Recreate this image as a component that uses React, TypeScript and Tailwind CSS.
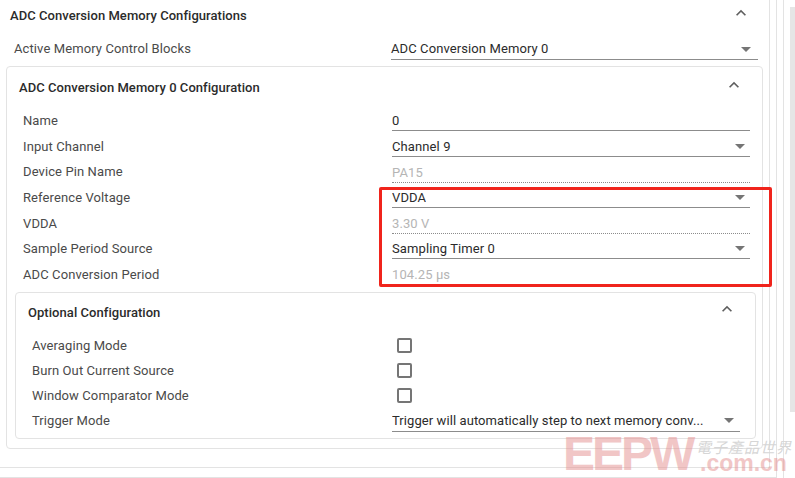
const font = { fontFamily: "Roboto, 'Noto Sans', sans-serif" };

function ChevronUp() {
  return (
    <svg width="20" height="20" viewBox="0 0 24 24" fill="#5f5f5f">
      <path d="M12 8l-6 6 1.41 1.41L12 10.83l4.59 4.58L18 14z" />
    </svg>
  );
}

function Caret() {
  return (
    <svg width="24" height="24" viewBox="0 0 24 24" fill="#757575" className="shrink-0">
      <path d="M7 10l5 5 5-5z" />
    </svg>
  );
}

function SelectField({ value, pad = "pt-[6px]", caret = "-mr-[2px]" }: { value: string; pad?: string; caret?: string }) {
  return (
    <div className={`flex h-full items-center justify-between border-b border-[#8c8c8c] text-[#2b2b2b] ${pad}`}>
      <span className="truncate">{value}</span>
      <span className={`-mt-[2px] flex h-4 items-center ${caret}`}>
        <Caret />
      </span>
    </div>
  );
}

function Row({ label, children }: { label: string; children: React.ReactNode }) {
  return (
    <div className="flex h-[25.6px] items-stretch text-[13px] tracking-[0.1px]">
      <div className="w-[369px] pt-[5.5px] text-[#4a4a4a]">{label}</div>
      <div className="flex-1">{children}</div>
    </div>
  );
}

function TextField({ value }: { value: string }) {
  return <div className="flex h-full items-center border-b border-[#8c8c8c] pt-[6px] text-[#2b2b2b]">{value}</div>;
}

function ReadOnly({ value }: { value: string }) {
  return <div className="flex h-full items-center border-b border-dotted border-[#8c8c8c] pt-[7px] text-[#b5b5b5]">{value}</div>;
}

function CheckRow({ label }: { label: string }) {
  return (
    <div className="flex h-[25px] items-center text-[13px] tracking-[0.1px]">
      <div className="w-[365px] pt-[1px] text-[#4a4a4a]">{label}</div>
      <div className="h-[15px] w-[15px] rounded-[2px] border-2 border-[#757575]"></div>
    </div>
  );
}

export default function App() {
  return (
    <div className="relative h-[478px] w-[795px] overflow-hidden bg-white" style={font}>
      <div className="flex h-full">
        {/* nested parent panels, only right/bottom edges are visible */}
        <div className="h-[488px] w-[784px] border-r border-b border-[#e3e3e3] pr-[6px] pb-[9px]">
          <div className="h-full border-r border-b border-[#e3e3e3] pr-[6px] pb-[9px]">
            <div className="h-full border-r border-b border-[#e3e3e3] pr-[6px] pb-[9px]">
              <div className="h-full">
                <div className="flex h-[30px] items-center justify-between pt-[1px] pr-[12px] pl-[10px]">
                  <span className="text-[13px] font-medium tracking-[0.05px] text-[#2b2b2b]">ADC Conversion Memory Configurations</span>
                  <span className="-mt-[6px]"><ChevronUp /></span>
                </div>
                <div className="flex h-[30px] pl-[14px] pr-[5px] text-[13px] tracking-[0.1px]">
                  <div className="w-[377px] pt-[9px] text-[#4a4a4a]">Active Memory Control Blocks</div>
                  <div className="flex-1">
                    <div className="flex h-full items-center justify-between border-b border-[#8c8c8c] pt-[8px] text-[#2b2b2b]">
                      <span>ADC Conversion Memory 0</span>
                      <span className="flex h-4 items-center"><Caret /></span>
                    </div>
                  </div>
                </div>

                <div className="mt-[6px] ml-[6px] h-[383px] rounded-[4px] border border-[#e3e3e3] pl-[16px] pr-[12px]">
                  <div className="-ml-[4px] flex h-[38.8px] items-center justify-between pt-[3px] pr-[6px]">
                    <span className="text-[13px] font-medium tracking-[0.05px] text-[#2b2b2b]">ADC Conversion Memory 0 Configuration</span>
                    <span className="-mt-[6px]"><ChevronUp /></span>
                  </div>
                  <Row label="Name"><TextField value="0" /></Row>
                  <Row label="Input Channel"><SelectField value="Channel 9" /></Row>
                  <Row label="Device Pin Name"><ReadOnly value="PA15" /></Row>
                  <Row label="Reference Voltage"><SelectField value="VDDA" /></Row>
                  <Row label="VDDA"><ReadOnly value="3.30 V" /></Row>
                  <Row label="Sample Period Source"><SelectField value="Sampling Timer 0" /></Row>
                  <Row label="ADC Conversion Period"><ReadOnly value="104.25 μs" /></Row>

                  <div className="mt-[7px] -ml-[8px] -mr-[6px] h-[147px] rounded-[4px] border border-[#e3e3e3] pl-[16px] pr-[15px]">
                    <div className="-ml-[4px] flex h-[39px] items-center justify-between pt-[1px] pr-[3px]">
                      <span className="text-[13px] font-medium tracking-[0.05px] text-[#2b2b2b]">Optional Configuration</span>
                      <span className="-mt-[7px]"><ChevronUp /></span>
                    </div>
                    <div className="pt-[1px]">
                      <CheckRow label="Averaging Mode" />
                      <CheckRow label="Burn Out Current Source" />
                      <CheckRow label="Window Comparator Mode" />
                      <div className="flex h-[24.5px] items-stretch text-[13px] tracking-[0.08px]">
                        <div className="w-[360px] pt-[3px] text-[#4a4a4a]">Trigger Mode</div>
                        <div className="min-w-0 flex-1">
                          <SelectField value="Trigger will automatically step to next memory conv..." pad="pt-[2px]" caret="-mr-[1px]" />
                        </div>
                      </div>
                    </div>
                  </div>
                </div>
              </div>
            </div>
          </div>
        </div>
        <div className="ml-[6px] mt-[7px] h-[405px] w-[5px] bg-[#e6e6e6]"></div>
      </div>

      {/* red annotation box */}
      <div className="absolute top-[187px] left-[379px] h-[100px] w-[393px] rounded-[2px] border-[3px] border-[#f0241c]"></div>

      {/* watermark */}
      <div className="pointer-events-none absolute top-[434px] left-[563px] text-[48px] leading-[40px] font-bold tracking-[-3px] text-[#e58f8f] opacity-50" style={{ fontFamily: "'Liberation Sans', sans-serif" }}>EEPW</div>
      <div className="pointer-events-none absolute top-[440px] left-[696px] text-[15px] leading-[14px] tracking-[1px] text-[#d6d6d6] italic" style={{ fontFamily: "'Noto Sans CJK TC', sans-serif" }}>電子產品世界</div>
      <div className="pointer-events-none absolute top-[454px] left-[700px] text-[23px] leading-[18px] font-bold text-[#e58f8f] opacity-50" style={{ fontFamily: "'Liberation Sans', sans-serif" }}>.com.cn</div>
    </div>
  );
}
